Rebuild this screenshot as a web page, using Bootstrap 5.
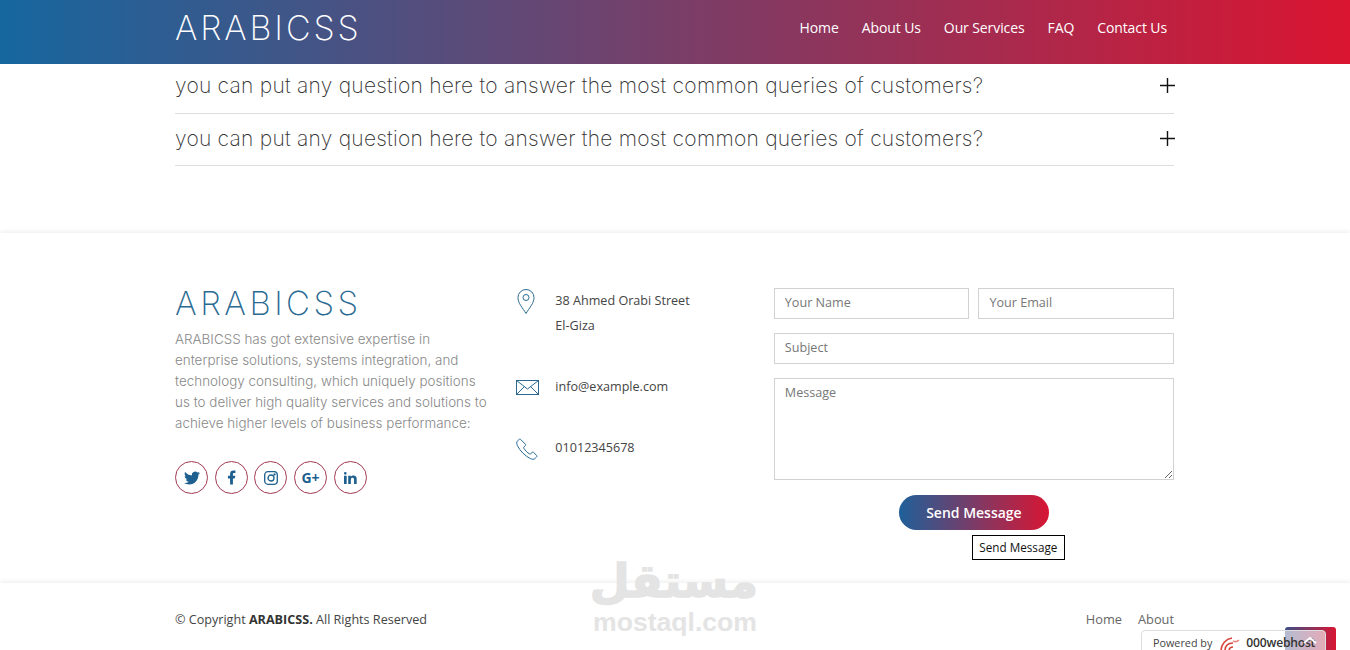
<!DOCTYPE html>
<html lang="en">
<head>
  <meta charset="UTF-8">
  <meta name="viewport" content="width=device-width, initial-scale=1.0">
  <title>ARABICSS</title>
  <link href="https://cdn.jsdelivr.net/npm/bootstrap@5.3.0/dist/css/bootstrap.min.css" rel="stylesheet">
  <style>
    html, body { height: 650px; overflow: hidden; }
    body { position: relative; font-family: "Open Sans", sans-serif; font-size: 12.6px; color: #444; background: #fff; }
    .site-wrap { max-width: 1030px; padding-left: 15px; padding-right: 15px; }
    .site-wrap .row { --bs-gutter-x: 30px; }
    .site-head { height: 64px; padding-bottom: 8px; background: linear-gradient(to right, #16679f, #da1531); }
    .brand-name { font-family: Inter, sans-serif; font-weight: 200; font-size: 34px; letter-spacing: 2.9px; line-height: 1; color: #fff; text-decoration: none; padding: 0; margin: 0; }
    .site-head .nav-link { font-family: "Open Sans", sans-serif; font-size: 14px; color: #fff; padding: 0; letter-spacing: -.1px; }
    .head-links { gap: 23px; margin-right: 8px; margin-bottom: 2px; }
    .faq-row { border-bottom: 1px solid #ddd; height: 52px; padding-bottom: 2px; font-family: Inter, sans-serif; font-weight: 200; font-size: 21px; letter-spacing: .24px; color: #333; margin-right: 1px; }
    .faq-row.first-row { height: 50px; padding-bottom: 5px; }
    .faq-row svg { margin-right: -1px; margin-bottom: 1px; }
    .faq-block { height: 169px; }
    .foot-main { height: 350px; padding-top: 50px; box-shadow: 0 -2px 4px rgba(0,0,0,.06); }
    .foot-logo { font-family: Inter, sans-serif; font-weight: 200; font-size: 33px; letter-spacing: 3.5px; line-height: 40px; color: #2a6a92; margin-top: 0; margin-bottom: 6px; }
    .foot-text { font-family: Inter, sans-serif; font-size: 13.4px; font-weight: 300; line-height: 21px; color: #888; margin-bottom: 27px; letter-spacing: .03px; }
    .social-dot { width: 33px; height: 33px; border: 1px solid #a03a52; border-radius: 50%; color: #1d5f8f; font-weight: 700; font-size: 14px; line-height: 1; text-decoration: none; }
    .social-set { gap: 6.7px; }
    .contact-col { padding-top: 5px; }
    .contact-line { color: #444; line-height: 25px; }
    .contact-icon { width: 39px; flex: none; margin-left: -2px; }
    .mail-line { margin-top: 36px; }
    .phone-line { margin-top: 36px; }
    .form-box .form-control { border-radius: 0; border: 1px solid #d2d2d2; font-size: 12.6px; padding: 4px 10px 6px; height: 31px; box-shadow: none; color: #444; }
    .form-box .form-control::placeholder { color: #777; }
    .form-box textarea.form-control { height: 102px; padding-top: 5px; }
    .form-box { gap: 14px; padding-top: 5px; margin-right: 1px; margin-left: -2px; position: relative; }
    .name-pair { gap: 9px; }
    .send-wrap { margin-top: 1px; }
    .send-btn { width: 150px; height: 35px; border: 0; border-radius: 18px; background: linear-gradient(to right, #1f6099, #d81634); color: #fff; font-size: 14px; font-weight: 600; padding: 0; }
    .send-tip { position: absolute; left: 198px; top: 252px; width: 93px; height: 25px; border: 1px solid #000; background: #fff; color: #111; font-size: 11.7px; line-height: 23px; text-align: center; }
    .foot-base { height: 67px; padding-top: 27px; box-shadow: 0 -2px 4px rgba(0,0,0,.06); }
    .foot-base strong { color: #333; }
    .copy-text { padding-top: 1px; }
    .base-links { gap: 16px; color: #666; font-size: 12.8px; margin-right: 1px; }
    .mostaql-mark { position: absolute; left: 592px; top: 552px; width: 166px; text-align: center; color: #e4e4e4; pointer-events: none; }
    .mostaql-ar { font-family: "DejaVu Sans", sans-serif; font-weight: 700; font-size: 46px; line-height: 58px; direction: rtl; -webkit-text-stroke: 1.5px #e4e4e4; }
    .mostaql-en { font-family: "Liberation Sans", sans-serif; font-weight: 700; font-size: 26.6px; line-height: 24px; }
    .top-btn { position: absolute; left: 1285px; top: 627px; width: 51px; height: 30px; border-radius: 3px; background: linear-gradient(to right, #3c4f86, #d81634); }
    .host-badge { position: absolute; left: 1141px; top: 630px; width: 185px; height: 26px; padding-left: 11px; gap: 6px; border: 1px solid #ddd; border-radius: 4px; background: rgba(255,255,255,.62); font-size: 10.8px; line-height: 1; color: #444; }
    .host-name { font-size: 12.1px; font-weight: 600; letter-spacing: -.2px; color: #333; }
    .top-caret { position: absolute; left: 1303px; top: 636px; }
  </style>
</head>
<body>
  <header class="site-head d-flex align-items-center">
    <div class="container site-wrap d-flex justify-content-between align-items-center">
      <a class="brand-name" href="#">ARABICSS</a>
      <ul class="nav head-links">
        <li class="nav-item"><a class="nav-link" href="#">Home</a></li>
        <li class="nav-item"><a class="nav-link" href="#">About Us</a></li>
        <li class="nav-item"><a class="nav-link" href="#">Our Services</a></li>
        <li class="nav-item"><a class="nav-link" href="#">FAQ</a></li>
        <li class="nav-item"><a class="nav-link" href="#">Contact Us</a></li>
      </ul>
    </div>
  </header>

  <section class="faq-block">
    <div class="container site-wrap">
      <div class="faq-row first-row d-flex justify-content-between align-items-center">
        <span>you can put any question here to answer the most common queries of customers?</span>
        <svg width="15" height="15" viewBox="0 0 15 15" stroke="#111" stroke-width="1.4"><path d="M7.5 0v15M0 7.500h15"/></svg>
      </div>
      <div class="faq-row d-flex justify-content-between align-items-center">
        <span>you can put any question here to answer the most common queries of customers?</span>
        <svg width="15" height="15" viewBox="0 0 15 15" stroke="#111" stroke-width="1.4"><path d="M7.5 0v15M0 7.500h15"/></svg>
      </div>
    </div>
  </section>

  <section class="foot-main">
    <div class="container site-wrap">
      <div class="row">
        <div class="col-4">
          <h2 class="foot-logo">ARABICSS</h2>
          <p class="foot-text">ARABICSS has got extensive expertise in enterprise solutions, systems integration, and technology consulting, which uniquely positions us to deliver high quality services and solutions to achieve higher levels of business performance:</p>
          <div class="d-flex social-set">
            <a class="social-dot d-flex align-items-center justify-content-center">
              <svg width="16" height="16" viewBox="0 0 24 24" fill="#1d5f8f"><path d="M23.953 4.57a10 10 0 01-2.825.775 4.958 4.958 0 002.163-2.723c-.951.555-2.005.959-3.127 1.184a4.92 4.92 0 00-8.384 4.482C7.69 8.095 4.067 6.13 1.64 3.162a4.822 4.822 0 00-.666 2.475c0 1.71.87 3.213 2.188 4.096a4.904 4.904 0 01-2.228-.616v.06a4.923 4.923 0 003.946 4.827 4.996 4.996 0 01-2.212.085 4.936 4.936 0 004.604 3.417 9.867 9.867 0 01-6.102 2.105c-.39 0-.779-.023-1.17-.067a13.995 13.995 0 007.557 2.209c9.053 0 13.998-7.496 13.998-13.985 0-.21 0-.42-.015-.63A9.935 9.935 0 0024 4.59z"/></svg>
            </a>
            <a class="social-dot d-flex align-items-center justify-content-center">
              <svg width="17" height="17" viewBox="0 0 24 24" fill="#1d5f8f"><path d="M14 13.5h2.5l1-4H14v-2c0-1.03 0-2 2-2h1.5V2.14c-.326-.043-1.557-.14-2.857-.14C11.928 2 10 3.657 10 6.7v2.8H7v4h3V22h4v-8.5z"/></svg>
            </a>
            <a class="social-dot d-flex align-items-center justify-content-center">
              <svg width="14" height="14" viewBox="0 0 14 14" fill="none" stroke="#1d5f8f" stroke-width="1.3"><rect x=".7" y=".7" width="12.6" height="12.6" rx="3.2"/><circle cx="7" cy="7" r="3"/><circle cx="10.6" cy="3.4" r=".5" fill="#1d5f8f"/></svg>
            </a>
            <a class="social-dot d-flex align-items-center justify-content-center">G+</a>
            <a class="social-dot d-flex align-items-center justify-content-center">
              <svg width="16" height="16" viewBox="0 0 24 24" fill="#1d5f8f"><path d="M6.94 5a2 2 0 1 1-4-.002 2 2 0 0 1 4 .002zM7 8.48H3V21h4V8.48zm6.32 0H9.34V21h3.94v-6.57c0-3.66 4.77-4 4.77 0V21H22v-7.93c0-6.17-7.06-5.94-8.72-2.91l.04-1.68z"/></svg>
            </a>
          </div>
        </div>

        <div class="col-3 contact-col">
          <div class="d-flex contact-line">
            <div class="contact-icon">
              <svg width="20" height="27" viewBox="0 0 20 27" fill="none" stroke="#2a6a92" stroke-width="1"><path d="M10 25.5C6.5 19.5 2 15.5 2 9.5a8 8 0 0 1 16 0c0 6-4.5 10-8 16z"/><circle cx="10" cy="9.5" r="3"/></svg>
            </div>
            <div>38 Ahmed Orabi Street<br>El-Giza</div>
          </div>
          <div class="d-flex contact-line mail-line">
            <div class="contact-icon">
              <svg width="24" height="17" viewBox="0 0 24 17" fill="none" stroke="#2a6a92" stroke-width="1"><rect x=".5" y="1.5" width="22" height="14"/><path d="M.5 1.5 11.500 10l11-8.500M.5 15.500l8-8M22.500 15.500l-8-8"/></svg>
            </div>
            <div>info@example.com</div>
          </div>
          <div class="d-flex contact-line phone-line">
            <div class="contact-icon">
              <svg width="22" height="22" viewBox="0 0 22 22" fill="none" stroke="#2a6a92" stroke-width="1"><path d="M3 1.500 1.200 3.300c-.7.8-.6 2.500.2 4.300C3.800 12.700 9.300 18.200 14.400 20.600c1.800.8 3.500.9 4.300.2l1.800-1.800c.5-.5.5-1.200 0-1.700l-2.800-2.800c-.5-.5-1.200-.5-1.700 0l-1.200 1.200c-.4.4-.9.4-1.300.2-2.100-1.200-4.500-3.600-5.700-5.700-.2-.4-.2-.9.2-1.300l1.200-1.200c.5-.5.5-1.200 0-1.700L4.700 1.500C4.200 1 3.500 1 3 1.500z"/></svg>
            </div>
            <div>01012345678</div>
          </div>
        </div>

        <div class="col-5">
          <form class="form-box d-flex flex-column">
            <div class="d-flex name-pair">
              <input class="form-control" type="text" placeholder="Your Name">
              <input class="form-control" type="email" placeholder="Your Email">
            </div>
            <input class="form-control" type="text" placeholder="Subject">
            <textarea class="form-control" placeholder="Message"></textarea>
            <div class="text-center send-wrap">
              <button class="send-btn" type="button">Send Message</button>
            </div>
            <div class="send-tip">Send Message</div>
          </form>
        </div>
      </div>
    </div>
  </section>

  <footer class="foot-base">
    <div class="container site-wrap d-flex justify-content-between">
      <span class="copy-text">© Copyright <strong>ARABICSS.</strong> All Rights Reserved</span>
      <div class="d-flex base-links"><span>Home</span><span>About</span></div>
    </div>
  </footer>

  <div class="mostaql-mark">
    <div class="mostaql-ar">مستقل</div>
    <div class="mostaql-en">mostaql.com</div>
  </div>

  <a class="top-btn"></a>
  <div class="host-badge d-flex align-items-center">
    <span>Powered by</span>
    <svg width="22" height="18" viewBox="0 0 22 18" fill="none" stroke="#d8443c" stroke-width="1.6"><path d="M3 17C3 10 8 5 14 4M7 17c0-5 3-8 8-8M11 17c0-3 2-4 4-4"/><path d="M15 7c2 1 4 1 6-1" stroke="#e58a82"/></svg>
    <span class="host-name">000webhost</span>
  </div>
  <svg class="top-caret" width="14" height="8" viewBox="0 0 14 8" fill="none" stroke="#fff" stroke-width="2"><path d="M1 7l6-5 6 5"/></svg>
</body>
</html>
